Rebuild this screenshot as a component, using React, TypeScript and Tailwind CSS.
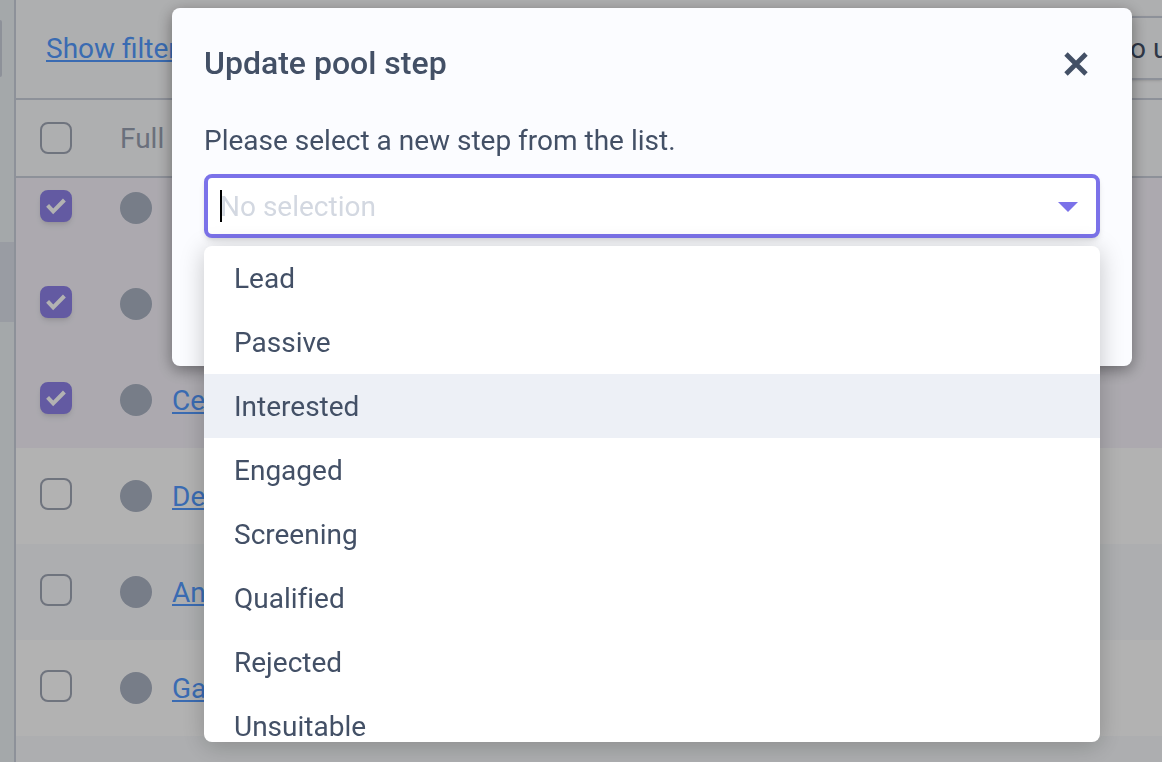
import type React from 'react';
import { memo, useState } from 'react';

interface Candidate {
  id: number;
  name: string;
  selected: boolean;
}

const candidates: Candidate[] = [
  { id: 1, name: '', selected: true },
  { id: 2, name: '', selected: true },
  { id: 3, name: 'Ce', selected: true },
  { id: 4, name: 'De', selected: false },
  { id: 5, name: 'An', selected: false },
  { id: 6, name: 'Ga', selected: false },
];

const steps = [
  'Lead',
  'Passive',
  'Interested',
  'Engaged',
  'Screening',
  'Qualified',
  'Rejected',
  'Unsuitable',
];

interface CheckboxProps {
  label: string;
  checked: boolean;
  onChange: () => void;
}

const Checkbox = memo<CheckboxProps>(({ label, checked, onChange }) => (
  <span className="relative block size-8">
    <input
      type="checkbox"
      aria-label={label}
      checked={checked}
      onChange={onChange}
      className="block size-8 appearance-none rounded-lg border-2 border-[#a0a6b5] checked:border-[#8f82e9] checked:bg-[#8f82e9] checked:shadow-md"
    />
    {checked && (
      <svg
        className="pointer-events-none absolute inset-0 size-8"
        viewBox="0 0 32 32"
        fill="none"
        stroke="#ffffff"
        strokeWidth="4"
        aria-hidden="true"
      >
        <path d="M7.6 15.4 L13.2 21.4 L24.4 10" />
      </svg>
    )}
  </span>
));

Checkbox.displayName = 'Checkbox';

const Sidebar = () => (
  <aside className="w-4 shrink-0 border-r-2 border-[#cbd0dc] bg-[#ebf1f4]">
    <div className="h-5" />
    <div className="h-[57px] w-0.5 rounded-r-sm bg-[#cbd0dc]" />
    <div className="h-[165px]" />
    <div className="h-20 bg-[#dce0ea]" />
  </aside>
);

const rowColor = (row: Candidate) => {
  if (row.selected) return 'bg-[#f6f3fb]';
  return row.id % 2 === 0 ? 'bg-white' : 'bg-[#f8fafc]';
};

const CandidateTable = () => {
  const [rows, setRows] = useState(candidates);

  const toggle = (id: number) =>
    setRows(rows.map((row) => (row.id === id ? { ...row, selected: !row.selected } : row)));

  return (
    <table className="w-full table-fixed border-collapse text-left">
      <colgroup>
        <col className="w-[104px]" />
        <col className="w-[52px]" />
        <col />
      </colgroup>
      <thead>
        <tr className="h-[78px] bg-[#fafbfc] shadow-[inset_0_-2px_0_#cbd0dc]">
          <th className="pb-0.5 pl-6">
            <Checkbox label="Select all" checked={false} onChange={() => setRows(candidates)} />
          </th>
          <th colSpan={2} className="font-normal text-[#99a1b2]">
            Full
          </th>
        </tr>
      </thead>
      <tbody className="align-bottom">
        {rows.map((row) => (
          <tr key={row.id} className={`h-24 first:h-[78px] ${rowColor(row)}`}>
            <td className="pb-[34px] pl-6">
              <Checkbox
                label={`Select candidate ${row.id}`}
                checked={row.selected}
                onChange={() => toggle(row.id)}
              />
            </td>
            <td className="pb-8">
              <div className="size-8 rounded-full bg-[#abb3c3]" />
            </td>
            <td className="pb-[29px]">
              {row.name && (
                <a
                  href="#candidate"
                  className="text-[#539aff] underline decoration-2 underline-offset-2"
                >
                  {row.name}
                </a>
              )}
            </td>
          </tr>
        ))}
      </tbody>
    </table>
  );
};

const StepSelect = () => {
  const [value, setValue] = useState('');

  return (
    <div className="relative mt-[15px]">
      <input
        id="pool-step"
        role="combobox"
        aria-expanded="true"
        aria-controls="pool-step-options"
        placeholder="No selection"
        value={value}
        onChange={(event) => setValue(event.target.value)}
        className="block h-16 w-full rounded-lg border-4 border-[#7b72e9] bg-white px-3 text-[#435066] caret-transparent shadow-md outline-none placeholder:text-[#d3d8e1]"
      />
      <span className="absolute top-4 left-4 h-8 w-0.5 bg-black" />
      <svg
        className="pointer-events-none absolute top-7 right-[22px] h-[10px] w-5"
        viewBox="0 0 20 10"
        fill="#7b72e9"
        aria-hidden="true"
      >
        <path d="M0 0H20L10 10Z" />
      </svg>
      <ul
        id="pool-step-options"
        role="listbox"
        className="absolute top-full right-0 left-0 mt-2 h-[496px] overflow-hidden rounded-lg bg-white shadow-[0_4px_24px_rgba(0,0,0,0.22)]"
      >
        {steps.map((step) => (
          <li
            key={step}
            role="option"
            aria-selected={step === 'Interested'}
            className="flex h-16 items-center px-[30px] pt-0.5 aria-selected:bg-[#edf0f6]"
          >
            {step}
          </li>
        ))}
      </ul>
    </div>
  );
};

const Modal = ({ title, children }: { title: string; children: React.ReactNode }) => (
  <div className="fixed inset-0 flex items-start bg-black/30 pt-2 pr-[30px] pl-[172px]">
    <section
      role="dialog"
      aria-label={title}
      className="min-w-0 flex-1 rounded-lg bg-[#fbfcff] px-8 pt-8 pb-32 text-[#435066] shadow-[0_4px_16px_rgba(0,0,0,0.4)] [font-variant-ligatures:none]"
    >
      <header className="flex h-12 items-center justify-between">
        <h2 className="pb-0.5 text-[32px] font-medium">{title}</h2>
        <button type="button" aria-label="Close" className="flex size-12 items-center justify-center">
          <svg
            className="size-6"
            viewBox="0 0 24 24"
            fill="none"
            stroke="currentColor"
            strokeWidth="4.8"
            aria-hidden="true"
          >
            <path d="M2 2 L22 22 M22 2 L2 22" />
          </svg>
        </button>
      </header>
      {children}
    </section>
  </div>
);

export default function App() {
  return (
    <div className="flex h-screen overflow-hidden bg-[#f8fafc] font-[Roboto,sans-serif] text-[28px] leading-9">
      <Sidebar />
      <main className="min-w-0 flex-1">
        <div className="flex h-[100px] items-start justify-between overflow-hidden border-b-2 border-[#cbd0dc] bg-[#fafbfc] pl-[30px]">
          <a
            href="#filters"
            className="mt-[31px] text-[#539aff] underline decoration-2 underline-offset-2"
          >
            Show filters
          </a>
          <button
            type="button"
            className="mt-4 h-16 w-[60px] border-y-2 border-[#cbd0dc] pt-0.5 pl-7 text-left whitespace-nowrap text-[#435066] shadow-sm"
          >
            o u
          </button>
        </div>
        <CandidateTable />
      </main>
      <Modal title="Update pool step">
        <label htmlFor="pool-step" className="mt-[35px] block">
          Please select a new step from the list.
        </label>
        <StepSelect />
      </Modal>
    </div>
  );
}
